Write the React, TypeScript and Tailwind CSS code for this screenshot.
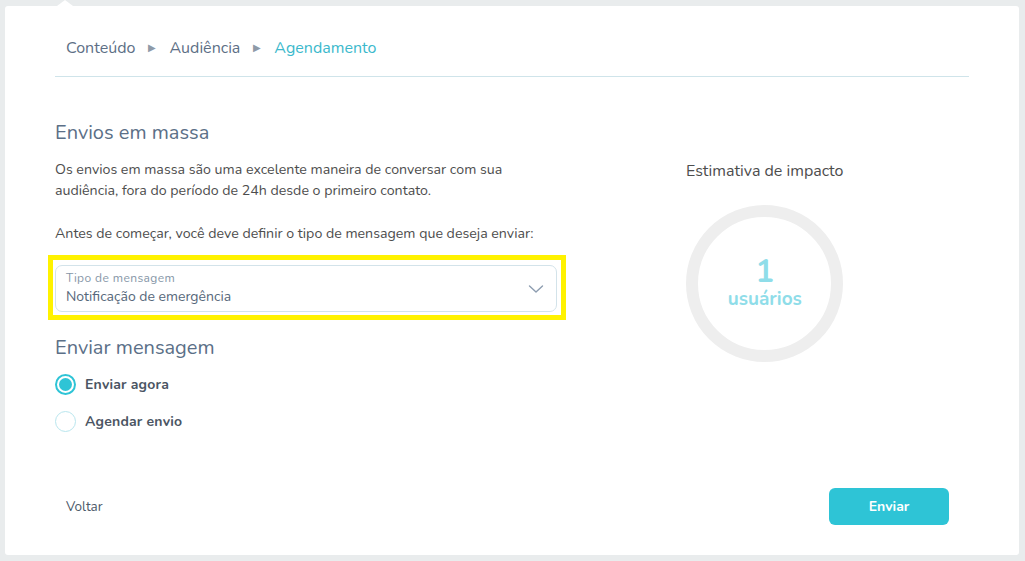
import React from "react";

function Chevron() {
  return (
    <svg width="16" height="10" viewBox="0 0 16 10" fill="none">
      <path d="M1.5 2l6.5 6 6.5-6" stroke="#8d9db0" strokeWidth="1.4" strokeLinecap="round" strokeLinejoin="round" />
    </svg>
  );
}

function Radio({ checked, label }: { checked?: boolean; label: string }) {
  return (
    <label className="flex items-center gap-[9px] h-[22px]">
      <span
        className={
          checked
            ? "w-[21px] h-[21px] rounded-full border-2 border-[#2ec4d6] flex items-center justify-center"
            : "w-[21px] h-[21px] rounded-full border-[1.5px] border-[#b9e6ee]"
        }
      >
        {checked && <span className="w-[13px] h-[13px] rounded-full bg-[#2ec4d6]" />}
      </span>
      <span className="text-[14px] font-bold text-[#4b5563] tracking-[0.2px]">{label}</span>
    </label>
  );
}

export default function App() {
  return (
    <div className="w-[1025px] h-[561px] bg-[#e9eced] pt-[6px] pl-[5px] font-['Nunito','Lato',sans-serif]">
      <div className="relative w-[1014px] h-[549px] bg-white rounded-[3px] px-[50px] flex flex-col">
        {/* notch */}
        <div className="absolute left-[52px] -top-[6px] w-0 h-0 border-l-[8px] border-r-[8px] border-b-[6px] border-l-transparent border-r-transparent border-b-white" />

        {/* breadcrumb */}
        <div className="h-[71px] border-b border-[#cfe4ea] flex items-center pl-[11px] pt-[14px] text-[16px] gap-[13px]">
          <span className="text-[#5d6f86]">Conteúdo</span>
          <span className="text-[#8e9aa8] text-[10px]">▶</span>
          <span className="text-[#5d6f86]">Audiência</span>
          <span className="text-[#8e9aa8] text-[10px]">▶</span>
          <span className="text-[#3bb9cc]">Agendamento</span>
        </div>

        <div className="flex flex-1">
          {/* left column */}
          <div className="w-[502px] pt-[43px]">
            <h2 className="text-[20px] text-[#5b6f87] leading-[26px]">Envios em massa</h2>
            <p className="mt-[13px] text-[14.2px] leading-[21px] text-[#4d4d4d] pr-[40px]">
              Os envios em massa são uma excelente maneira de conversar com sua audiência, fora do período de 24h desde o primeiro contato.
            </p>
            <p className="mt-[22px] text-[14.2px] leading-[21px] text-[#4d4d4d] whitespace-nowrap">
              Antes de começar, você deve definir o tipo de mensagem que deseja enviar:
            </p>

            <div className="mt-[11px] -ml-[7px] w-[518px] border-[5px] border-[#fff200] pt-[5px] pb-[3px] pl-[2px] pr-[4px]">
              <div className="h-[47px] rounded-[7px] border border-[#d3e3ea] flex items-center justify-between pl-[10px] pr-[12px]">
                <div className="flex flex-col">
                  <span className="text-[12px] text-[#8696a7] leading-[15px] tracking-[0.4px]">Tipo de mensagem</span>
                  <span className="text-[14px] text-[#56677a] leading-[20px] mt-[1px]">Notificação de emergência</span>
                </div>
                <Chevron />
              </div>
            </div>

            <h2 className="mt-[15px] text-[20px] text-[#5b6f87] leading-[26px]">Enviar mensagem</h2>
            <div className="mt-[12px] flex flex-col gap-[15px]">
              <Radio checked label="Enviar agora" />
              <Radio label="Agendar envio" />
            </div>
          </div>

          {/* right column */}
          <div className="flex-1 flex justify-start pl-[129px] pt-[83px]">
            <div className="flex flex-col items-center">
              <span className="text-[16px] text-[#4d4d4d] leading-[22px]">Estimativa de impacto</span>
              <div className="mt-[23px] w-[157px] h-[157px] rounded-full border-[12px] border-[#eeeeee] flex flex-col items-center justify-center">
                <span className="text-[31px] font-bold text-[#8fdde9] leading-[28px]">1</span>
                <span className="mt-[3px] text-[19px] font-bold text-[#8fdde9] leading-[20px]">usuários</span>
              </div>
            </div>
          </div>
        </div>

        {/* footer */}
        <div className="h-[67px] flex items-start justify-between pb-[30px]">
          <button className="h-[37px] pl-[11px] pt-[1px] text-[13.5px] text-[#4d5a6a]">Voltar</button>
          <button className="mr-[20px] w-[120px] h-[37px] rounded-[6px] bg-[#2ec4d6] text-white text-[14px] font-bold">
            Enviar
          </button>
        </div>
      </div>
    </div>
  );
}
